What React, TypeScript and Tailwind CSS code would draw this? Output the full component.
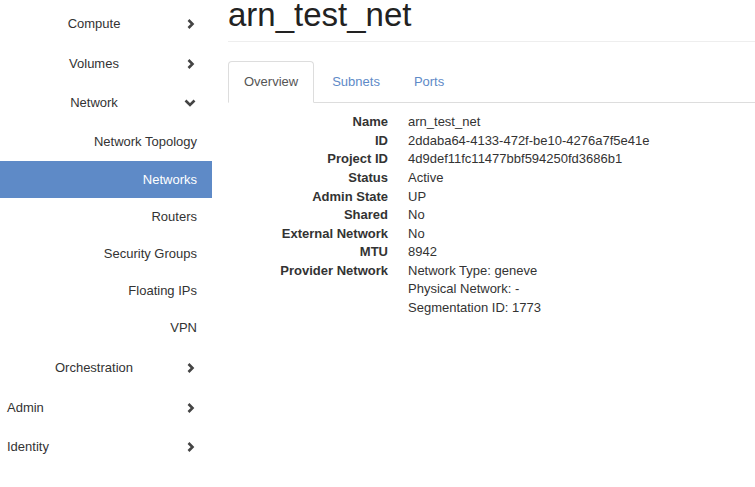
import React from "react";

type NavItem = {
  label: string;
  kind: "group" | "panel" | "sub";
  h: number;
  open?: boolean;
  active?: boolean;
};

const nav: NavItem[] = [
  { label: "Compute", kind: "group", h: 40 },
  { label: "Volumes", kind: "group", h: 40 },
  { label: "Network", kind: "group", h: 38, open: true },
  { label: "Network Topology", kind: "sub", h: 39 },
  { label: "Networks", kind: "sub", h: 37, active: true },
  { label: "Routers", kind: "sub", h: 37 },
  { label: "Security Groups", kind: "sub", h: 37 },
  { label: "Floating IPs", kind: "sub", h: 37 },
  { label: "VPN", kind: "sub", h: 38 },
  { label: "Orchestration", kind: "group", h: 41 },
  { label: "Admin", kind: "panel", h: 39 },
  { label: "Identity", kind: "panel", h: 39 },
];

const details: [string, string[]][] = [
  ["Name", ["arn_test_net"]],
  ["ID", ["2ddaba64-4133-472f-be10-4276a7f5e41e"]],
  ["Project ID", ["4d9def11fc11477bbf594250fd3686b1"]],
  ["Status", ["Active"]],
  ["Admin State", ["UP"]],
  ["Shared", ["No"]],
  ["External Network", ["No"]],
  ["MTU", ["8942"]],
  [
    "Provider Network",
    ["Network Type: geneve", "Physical Network: -", "Segmentation ID: 1773"],
  ],
];

function Chevron({ open }: { open?: boolean }) {
  if (open) {
    return (
      <svg width="12" height="8" viewBox="0 0 12 8" className="block">
        <path
          d="M1.5 1.5 L6 6 L10.5 1.5"
          fill="none"
          stroke="#444"
          strokeWidth="2.6"
        />
      </svg>
    );
  }
  return (
    <svg width="8" height="10" viewBox="0 0 8 10" className="block">
      <path
        d="M1.5 1 L5.5 5 L1.5 9"
        fill="none"
        stroke="#444"
        strokeWidth="2.6"
      />
    </svg>
  );
}

function SideRow({ item }: { item: NavItem }) {
  if (item.kind === "sub") {
    return (
      <div
        className={`flex items-center justify-end pr-[15px] ${
          item.active ? "bg-[#5e8ac7] text-white" : "text-[#333]"
        }`}
        style={{ height: item.h }}
      >
        {item.label}
      </div>
    );
  }
  return (
    <div className="flex items-center text-[#333]" style={{ height: item.h }}>
      {item.kind === "group" ? (
        <span className="w-[188px] text-center">{item.label}</span>
      ) : (
        <span className="w-[188px] pl-[7px]">{item.label}</span>
      )}
      <span
        className={`flex justify-center ${item.open ? "w-[12px] ml-[-4px]" : "w-[8px] ml-[-1px]"}`}
      >
        <Chevron open={item.open} />
      </span>
    </div>
  );
}

export default function App() {
  return (
    <div
      className="w-[755px] h-[487px] overflow-hidden bg-white flex text-[13px] text-[#333]"
      style={{ fontFamily: '"Liberation Sans", Arial, sans-serif' }}
    >
      {/* Sidebar */}
      <div className="w-[212px] shrink-0 pt-[4px]">
        {nav.map((item) => (
          <SideRow key={item.label} item={item} />
        ))}
      </div>

      {/* Main */}
      <div className="flex-1 pl-[16px]">
        <div className="border-b border-[#eee] pb-[8px]">
          <h1 className="-mt-[3px] text-[33px] leading-[1.1] text-[#222]">
            arn_test_net
          </h1>
        </div>

        <ul className="mt-[19px] flex border-b border-[#ddd]">
          <li className="-mb-px mr-[2px]">
            <span className="block rounded-t border border-[#ddd] border-b-white bg-white px-[15px] py-[10px] leading-5 text-[#555]">
              Overview
            </span>
          </li>
          <li className="-mb-px mr-[2px]">
            <span className="block border border-transparent px-[15px] py-[10px] leading-5 text-[#5e8ac7]">
              Subnets
            </span>
          </li>
          <li className="-mb-px mr-[2px]">
            <span className="block border border-transparent px-[15px] py-[10px] leading-5 text-[#5e8ac7]">
              Ports
            </span>
          </li>
        </ul>

        <dl className="mt-[10px] leading-[1.428571]">
          {details.map(([k, vals]) => (
            <div key={k} className="flex">
              <dt className="w-[160px] shrink-0 text-right font-bold">{k}</dt>
              <dd className="ml-[20px]">
                {vals.map((v) => (
                  <div key={v}>{v}</div>
                ))}
              </dd>
            </div>
          ))}
        </dl>
      </div>
    </div>
  );
}
